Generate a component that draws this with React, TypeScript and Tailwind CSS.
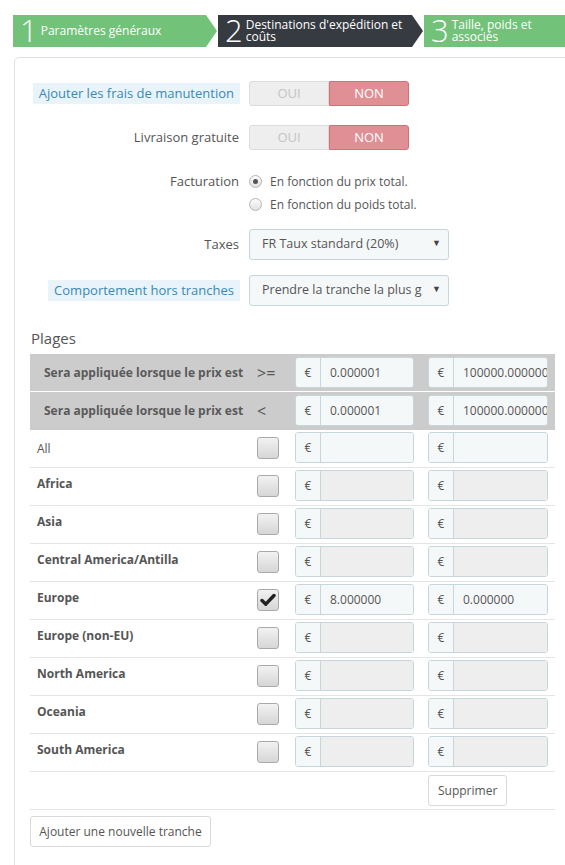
import React from 'react';

/**
 * Transporteur - étape 2 : destinations d'expédition et coûts
 */

const zones = [
  { name: 'Africa', checked: false },
  { name: 'Asia', checked: false },
  { name: 'Central America/Antilla', checked: false },
  { name: 'Europe', checked: true, v1: '8.000000', v2: '0.000000' },
  { name: 'Europe (non-EU)', checked: false },
  { name: 'North America', checked: false },
  { name: 'Oceania', checked: false },
  { name: 'South America', checked: false },
];

function Step({ n, lines, dark, w }: { n: string; lines: string[]; dark?: boolean; w: string }) {
  return (
    <div
      className={`${w} shrink-0 h-[32px] flex items-center pl-[7px] pr-[12px] overflow-hidden [clip-path:polygon(0_0,calc(100%-11px)_0,100%_50%,calc(100%-11px)_100%,0_100%)] ${
        dark ? 'bg-[#363a41]' : 'bg-[#72c279]'
      }`}
    >
      <span className="text-white text-[31px] leading-none font-light mr-[3px] -mt-[1px]">{n}</span>
      <span className="text-white text-[12px] leading-[12px] whitespace-nowrap">
        {lines.map((l) => (
          <span key={l} className="block">
            {l}
          </span>
        ))}
      </span>
    </div>
  );
}

function Toggle() {
  return (
    <div className="flex w-[160px] h-[25px] text-[13px]">
      <div className="flex-1 flex items-center justify-center bg-[#eeeeee] border border-[#dcdcdc] rounded-l-[3px] text-[#c4c4c4]">
        OUI
      </div>
      <div className="flex-1 flex items-center justify-center bg-[#e08f95] border border-[#d27078] rounded-r-[3px] text-white">
        NON
      </div>
    </div>
  );
}

function Radio({ checked, label }: { checked?: boolean; label: string }) {
  return (
    <div className="flex items-center h-[23px]">
      <span className="w-[13px] h-[13px] rounded-full border border-[#b5b5b5] bg-gradient-to-b from-[#fbfbfb] to-[#e2e2e2] flex items-center justify-center">
        {checked && <span className="w-[5px] h-[5px] rounded-full bg-[#555]" />}
      </span>
      <span className="ml-[8px] text-[12px] text-[#555]">{label}</span>
    </div>
  );
}

function Select({ value }: { value: string }) {
  return (
    <div className="w-[200px] h-[31px] flex items-center justify-between bg-[#f5f8f9] border border-[#c7d6db] rounded-[3px] pl-[12px] pr-[7px] text-[12.5px] text-[#555]">
      <span className="whitespace-nowrap overflow-hidden w-[160px]">{value}</span>
      <span className="text-[9px] text-[#444] -mt-[4px]">▼</span>
    </div>
  );
}

function Label({ text, hint }: { text: string; hint?: boolean }) {
  return (
    <div className="w-[210px] flex justify-end">
      {hint ? (
        <span className="bg-[#e9f4fa] text-[#3b88b4] px-[6px] py-[1px] text-[13px] whitespace-nowrap">{text}</span>
      ) : (
        <span className="text-[#555] text-[13px] pr-[1px] whitespace-nowrap">{text}</span>
      )}
    </div>
  );
}

function Price({ value, enabled, wide }: { value?: string; enabled?: boolean; wide?: boolean }) {
  return (
    <div
      className={`${wide ? 'w-[120px]' : 'w-[119px]'} h-[31px] flex border border-[#c7d6db] rounded-[3px] overflow-hidden text-[12px] text-[#555]`}
    >
      <div className="w-[25px] flex items-center justify-center bg-[#f5f8f9] border-r border-[#c7d6db]">€</div>
      <div
        className={`flex-1 flex items-center pl-[9px] whitespace-nowrap overflow-hidden ${
          enabled ? 'bg-[#f5f8f9]' : 'bg-[#eeeeee]'
        }`}
      >
        {value}
      </div>
    </div>
  );
}

function Checkbox({ checked }: { checked?: boolean }) {
  return (
    <div className="w-[22px] h-[22px] rounded-[3px] border border-[#a9a9a9] bg-gradient-to-b from-[#f2f2f2] to-[#d6d6d6] flex items-center justify-center">
      {checked && (
        <svg width="16" height="14" viewBox="0 0 16 14">
          <path d="M2 7.5 L5.8 11.2 L14 2.5" fill="none" stroke="#222" strokeWidth="3.4" strokeLinecap="round" strokeLinejoin="round" />
        </svg>
      )}
    </div>
  );
}

export default function App() {
  return (
    <div className="w-[565px] h-[865px] overflow-hidden bg-white font-['Open_Sans',sans-serif]">
      {/* Étapes */}
      <div className="flex pt-[15px] pl-[13px] gap-[1px] overflow-hidden">
        <Step n="1" lines={['Paramètres généraux']} w="w-[204px]" />
        <Step n="2" lines={["Destinations d'expédition et", 'coûts']} dark w="w-[205px]" />
        <Step n="3" lines={['Taille, poids et', 'associés']} w="w-[200px]" />
      </div>

      {/* Panneau */}
      <div className="ml-[14px] mt-[10px] w-[600px] h-[900px] border border-[#e0e0e0] rounded-tl-[5px] pl-[15px] pt-[23px]">
        <div className="flex flex-col">
          <div className="flex items-center gap-[9px]">
            <Label text="Ajouter les frais de manutention" hint />
            <Toggle />
          </div>
          <div className="flex items-center gap-[9px] mt-[19px]">
            <Label text="Livraison gratuite" />
            <Toggle />
          </div>
          <div className="flex items-start gap-[9px] mt-[20px]">
            <div className="w-[210px] flex justify-end h-[23px] items-center">
              <span className="text-[#555] text-[13px] pr-[1px]">Facturation</span>
            </div>
            <div className="flex flex-col">
              <Radio checked label="En fonction du prix total." />
              <Radio label="En fonction du poids total." />
            </div>
          </div>
          <div className="flex items-center gap-[9px] mt-[13px]">
            <Label text="Taxes" />
            <Select value="FR Taux standard (20%)" />
          </div>
          <div className="flex items-center gap-[9px] mt-[15px]">
            <Label text="Comportement hors tranches" hint />
            <Select value="Prendre la tranche la plus grande" />
          </div>
        </div>

        {/* Plages */}
        <div className="mt-[22px] font-['Liberation_Sans_Narrow','Open_Sans',sans-serif] text-[15px] text-[#555] pl-[1px] leading-[20px]">
          Plages
        </div>

        <div className="w-[525px] mt-[6px] text-[#555]">
          {['>=', '<'].map((op, i) => (
            <div key={op} className={`flex h-[38px] bg-[#cccccc] ${i === 0 ? 'border-b border-white' : ''}`}>
              <div className="w-[220px] pl-[14px] flex items-center text-[12px] font-bold text-[#5a5a5a] whitespace-nowrap">
                Sera appliquée lorsque le prix est
              </div>
              <div className="w-[45px] flex items-center pl-[7px] text-[16px] text-[#555]">{op}</div>
              <div className="w-[133px] pt-[3px]">
                <Price value="0.000001" enabled />
              </div>
              <div className="w-[127px] pt-[3px]">
                <Price value="100000.000000" enabled wide />
              </div>
            </div>
          ))}

          <div className="flex h-[38px] border-b border-[#e5e5e5]">
            <div className="w-[220px] pl-[7px] pt-[10px] text-[12px] text-[#555]">All</div>
            <div className="w-[45px] pl-[7px] pt-[7px]">
              <Checkbox />
            </div>
            <div className="w-[133px] pt-[2px]">
              <Price enabled />
            </div>
            <div className="w-[127px] pt-[2px]">
              <Price enabled wide />
            </div>
          </div>

          {zones.map((z) => (
            <div key={z.name} className="flex h-[38px] border-b border-[#e5e5e5]">
              <div className="w-[220px] pl-[7px] pt-[7px] text-[12px] font-bold text-[#555] whitespace-nowrap">
                {z.name}
              </div>
              <div className="w-[45px] pl-[7px] pt-[7px]">
                <Checkbox checked={z.checked} />
              </div>
              <div className="w-[133px] pt-[2px]">
                <Price value={z.v1} enabled={z.checked} />
              </div>
              <div className="w-[127px] pt-[2px]">
                <Price value={z.v2} enabled={z.checked} wide />
              </div>
            </div>
          ))}

          <div className="flex h-[38px] border-b border-[#e5e5e5]">
            <div className="w-[398px]" />
            <div className="pt-[3px]">
              <button className="h-[31px] px-[9px] bg-white border border-[#d9d9d9] rounded-[3px] text-[12px] text-[#555]">
                Supprimer
              </button>
            </div>
          </div>

          <div className="pt-[6px]">
            <button className="h-[31px] w-[181px] bg-white border border-[#d9d9d9] rounded-[3px] text-[12px] text-[#555]">
              Ajouter une nouvelle tranche
            </button>
          </div>
        </div>
      </div>
    </div>
  );
}
